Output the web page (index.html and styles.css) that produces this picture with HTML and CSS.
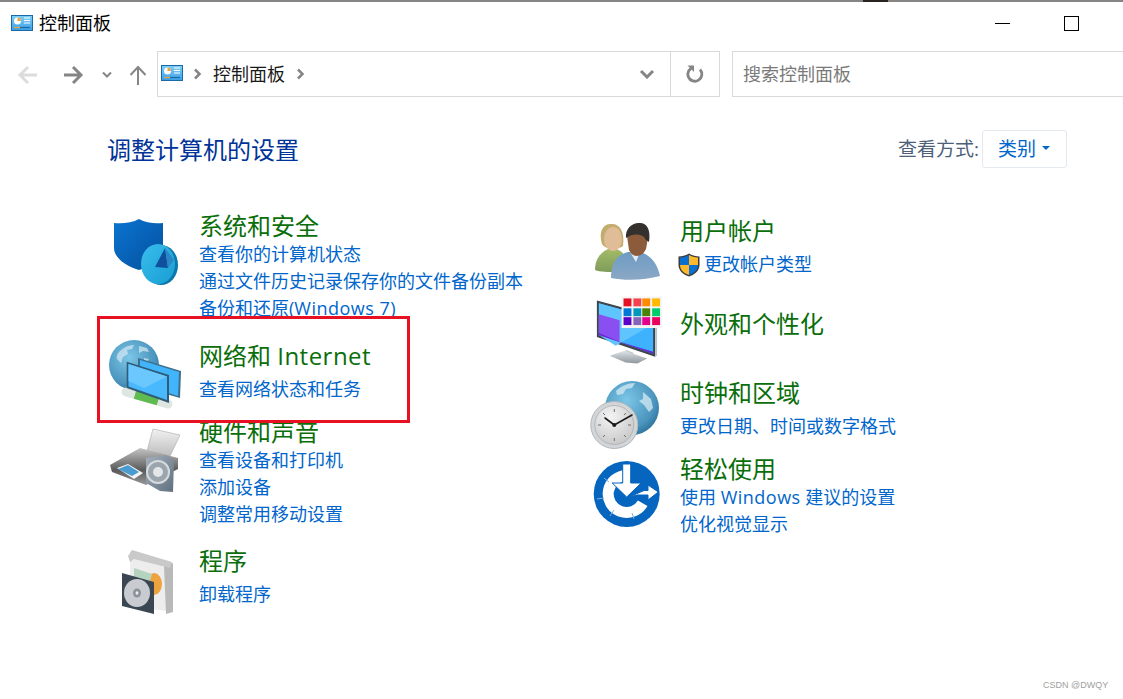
FILE: index.html
```html
<!DOCTYPE html>
<html lang="zh-CN">
  <head>
    <meta charset="UTF-8" />
    <title>控制面板</title>
    <link rel="stylesheet" href="styles.css">
  </head>
  <body>
    <svg class="defs" width="0" height="0">
      <defs>
        <linearGradient id="cp-bg" x1="0" y1="0" x2="0" y2="1">
          <stop offset="0" stop-color="#7fd0fa" />
          <stop offset="1" stop-color="#3d9fe6" />
        </linearGradient>
        <radialGradient id="globe-bg" cx="0.4" cy="0.35" r="0.75">
          <stop offset="0" stop-color="#7cc6e8" />
          <stop offset="0.7" stop-color="#4a94bd" />
          <stop offset="1" stop-color="#25688f" />
        </radialGradient>
        <symbol id="cp-icon" viewBox="0 0 22 16">
          <rect x="0.5" y="0.5" width="21" height="15" fill="url(#cp-bg)" stroke="#1b6aa5" />
          <circle cx="6.5" cy="6" r="3.5" fill="#fff" />
          <path d="M6.5 6V2.5A3.5 3.5 0 0 1 10 6Z" fill="#f2a33a" />
          <path d="M13 3h6M13 5.5h6M13 8h6" stroke="#fff" stroke-width="1.2" />
          <path d="M3 12.5h6" stroke="#f2a33a" stroke-width="1.2" />
          <path d="M9 12.5h10" stroke="#1b6aa5" stroke-width="1.2" />
        </symbol>
      </defs>
    </svg>

    <div class="window">
      <div class="titlebar">
        <svg class="cp-small" width="22" height="16"><use href="#cp-icon" /></svg>
        <span class="title">控制面板</span>
        <span class="minimize"></span>
        <span class="maximize"></span>
      </div>

      <div class="navbar">
        <div class="nav-btns">
          <svg width="157" height="46" viewBox="0 0 157 46">
            <path d="M37 24H20M28 16l-8 8 8 8" fill="none" stroke="#dcdcdc" stroke-width="3" />
            <path d="M64 24h17M73 16l8 8-8 8" fill="none" stroke="#858585" stroke-width="3" />
            <path d="M103 21.500l4 4 4-4" fill="none" stroke="#858585" stroke-width="2" />
            <path d="M138 34V17M130.500 24l7.500-8 7.500 8" fill="none" stroke="#858585" stroke-width="2" />
          </svg>
        </div>
        <div class="address">
          <svg class="cp-small crumb-icon" width="22" height="16"><use href="#cp-icon" /></svg>
          <svg class="crumb-sep" width="9" height="12" viewBox="0 0 9 12"><path d="M2 1.500l4.500 4.500-4.500 4.500" fill="none" stroke="#858585" stroke-width="2.500" /></svg>
          <span class="crumb">控制面板</span>
          <svg class="crumb-sep" width="9" height="12" viewBox="0 0 9 12"><path d="M2 1.500l4.500 4.500-4.500 4.500" fill="none" stroke="#858585" stroke-width="2.500" /></svg>
          <span class="address-fill"></span>
          <svg class="address-drop" width="16" height="10" viewBox="0 0 16 10"><path d="M2 2l6 6 6-6" fill="none" stroke="#858585" stroke-width="3" /></svg>
          <span class="refresh">
            <svg width="20" height="20" viewBox="0 0 20 20">
              <path d="M6 4.500A7 7 0 1 0 13 4" fill="none" stroke="#858585" stroke-width="2.800" transform="rotate(22 10 10)" />
              <path d="M2.500 1.500h6.500v6.500z" fill="#858585" />
            </svg>
          </span>
        </div>
        <div class="search">搜索控制面板</div>
      </div>

      <div class="main">
        <div class="head">
          <h1>调整计算机的设置</h1>
          <span class="view-label">查看方式:</span>
          <span class="view-select">类别<i class="caret"></i></span>
        </div>

        <div class="columns">
          <div class="col col-left">
            <div class="cat">
              <svg class="icon icon-security" width="72" height="72" viewBox="0 0 72 72">
                <defs>
                  <linearGradient id="sh" x1="0" y1="0" x2="1" y2="1"><stop offset="0" stop-color="#0b74cf" /><stop offset="1" stop-color="#04509f" /></linearGradient>
                  <linearGradient id="pie" x1="0" y1="0" x2="1" y2="1"><stop offset="0" stop-color="#38bdee" /><stop offset="1" stop-color="#1a9ed2" /></linearGradient>
                </defs>
                <path d="M6 7C14 8 24 7 31 3C38 7 47 8 55 7V32C55 42 44 50 31 54C18 50 6 42 6 32Z" fill="url(#sh)" />
                <ellipse cx="53" cy="49" rx="17" ry="20" fill="#0a78ad" />
                <ellipse cx="50" cy="48" rx="17" ry="20" fill="url(#pie)" />
                <polygon points="47,51 57,32 60,52" fill="#0f4f9e" />
                <polygon points="57,32 66,44 60,52" fill="#2a86c4" />
              </svg>
              <div class="cat-body">
                <h2>系统和安全</h2>
                <ul class="links tight">
                  <li>查看你的计算机状态</li>
                  <li>通过文件历史记录保存你的文件备份副本</li>
                  <li>备份和还原(<span class="latin">Windows 7</span>)</li>
                </ul>
              </div>
            </div>

            <div class="cat">
              <svg class="icon icon-network" width="72" height="72" viewBox="0 0 72 72">
                <circle cx="26" cy="27" r="25" fill="url(#globe-bg)" />
                <path d="M12 13c4-4 9-6 14-6l-2 4-5 1 1 4-5 3-2 6-4-4c-1-3 1-6 3-8ZM31 8l8 2 2 4-6-1-4 2ZM36 20l5 1-2 3-3-2Z" fill="#d5eaf3" opacity="0.7" />
                <polygon points="30,20 73,33 72,60 30,48" fill="#3c6f8c" />
                <polygon points="32,22 71,34 70,58 32,46" fill="#42b4fb" />
                <path d="M18 54L60 66" stroke="#dfe6e2" stroke-width="9" stroke-linecap="round" />
                <path d="M27 56.500L50 63" stroke="#5fbb4f" stroke-width="9" />
                <polygon points="18.700,23.700 61,37 61,65 18.700,50" fill="#2f5d76" />
                <polygon points="20.500,26 59,38.500 59,62 20.500,48.500" fill="#4ab8fd" />
                <polygon points="20.500,26 59,38.500 36,50 20.500,43" fill="#6ac8ff" />
              </svg>
              <div class="cat-body">
                <h2>网络和 <span class="latin">Internet</span></h2>
                <ul class="links">
                  <li>查看网络状态和任务</li>
                </ul>
              </div>
            </div>

            <div class="cat">
              <svg class="icon icon-hardware" width="72" height="72" viewBox="0 0 72 72">
                <defs>
                  <linearGradient id="prn" x1="0" y1="0" x2="0" y2="1"><stop offset="0" stop-color="#c4c4c4" /><stop offset="0.6" stop-color="#5a5a5a" /><stop offset="1" stop-color="#9a9a9a" /></linearGradient>
                  <linearGradient id="spk" x1="0" y1="0" x2="1" y2="1"><stop offset="0" stop-color="#a5b1bd" /><stop offset="1" stop-color="#5f6f7e" /></linearGradient>
                  <linearGradient id="paper" x1="0" y1="0" x2="0" y2="1"><stop offset="0" stop-color="#f2f2f2" /><stop offset="1" stop-color="#bdbdbd" /></linearGradient>
                </defs>
                <polygon points="45,4 72,10 62,31 39,26" fill="url(#paper)" stroke="#a8a8a8" stroke-width="0.600" />
                <polygon points="2,40 32,23 70,33 70,44 38,60 4,47" fill="url(#prn)" />
                <polygon points="9,43 20,39 35,48 26,54" fill="#f4f4f4" />
                <polygon points="10,44 20,40 31,47 24,51" fill="#4a9bd0" />
                <polygon points="38,33 58,30 66,36 65,67 52,66 38,58" fill="url(#spk)" />
                <circle cx="50" cy="47" r="11" fill="#9aa5ad" stroke="#d5dadd" stroke-width="2" />
                <circle cx="50" cy="47" r="5" fill="#e3e6e8" />
              </svg>
              <div class="cat-body">
                <h2>硬件和声音</h2>
                <ul class="links tight">
                  <li>查看设备和打印机</li>
                  <li>添加设备</li>
                  <li>调整常用移动设置</li>
                </ul>
              </div>
            </div>

            <div class="cat">
              <svg class="icon icon-programs" width="72" height="72" viewBox="0 0 72 72">
                <polygon points="22,5 65,17 65,66 22,60" fill="#ededed" />
                <polygon points="56,20 65,17 65,66 58,68" fill="#b9b9b9" />
                <polygon points="20,10 24,4 64,16 62,22 26,13 22,16" fill="#c9c9c9" />
                <ellipse cx="46" cy="38" rx="8" ry="11" fill="#eea33f" />
                <polygon points="26,22 44,28 38,50 26,46" fill="#b5d3be" />
                <polygon points="14,27 46,36 46,68 14,60" fill="#3a4651" />
                <ellipse cx="29" cy="47" rx="13" ry="14" fill="#c8ccd0" />
                <ellipse cx="29" cy="47" rx="4" ry="4.500" fill="#8a929a" />
                <ellipse cx="29" cy="47" rx="1.500" ry="1.800" fill="#eee" />
              </svg>
              <div class="cat-body">
                <h2>程序</h2>
                <ul class="links">
                  <li>卸载程序</li>
                </ul>
              </div>
            </div>
          </div>

          <div class="col col-right">
            <div class="cat">
              <svg class="icon" width="72" height="72" viewBox="0 0 72 72">
                <defs>
                  <linearGradient id="man" x1="0" y1="0" x2="0" y2="1"><stop offset="0" stop-color="#6f9cc6" /><stop offset="1" stop-color="#8aa8c4" /></linearGradient>
                  <linearGradient id="wom" x1="0" y1="0" x2="0" y2="1"><stop offset="0" stop-color="#a3bd68" /><stop offset="1" stop-color="#7f9c5c" /></linearGradient>
                </defs>
                <path d="M5 54C5 42 12 34 22 32C30 33 36 38 38 48L28 56C18 56 10 56 5 54Z" fill="url(#wom)" />
                <path d="M12 28C8 14 14 7 22 8C30 8 35 16 33 30C28 34 16 34 12 28Z" fill="#c2ad6e" />
                <ellipse cx="23" cy="23" rx="9" ry="12" fill="#e0bd97" />
                <path d="M21 62C21 48 26 39 38 36H50C62 39 68 50 70 60C56 64 36 65 21 62Z" fill="url(#man)" />
                <path d="M40 36L46 46L50 36Z" fill="#e6eef3" />
                <path d="M37 20C37 10 58 8 58 22L56 33C52 42 42 42 39 34Z" fill="#8b5b3c" />
                <path d="M36 22C35 11 44 6 50 7C57 7 61 14 59 26L56 24C54 18 44 16 36 22Z" fill="#33302e" />
              </svg>
              <div class="cat-body">
                <h2>用户帐户</h2>
                <ul class="links">
                  <li class="with-shield">
                    <svg width="22" height="24" viewBox="0 0 22 24">
                      <path d="M11 .500C14 2.500 17.500 3.500 21.500 3.500V12C21.500 18 16 22 11 23.500C6 22 .500 18 .500 12V3.500C4.500 3.500 8 2.500 11 .500Z" fill="#3b3b3b" />
                      <path d="M11 2V12H2V4.500C5.500 4.500 8.500 3.500 11 2Z" fill="#0a6fd0" />
                      <path d="M11 2C13.500 3.500 16.500 4.500 20 4.500V12H11Z" fill="#fdb92e" />
                      <path d="M2 12H11V22C6 20.500 2 17 2 12Z" fill="#fdb92e" />
                      <path d="M11 12H20C20 17 16 20.500 11 22Z" fill="#0a6fd0" />
                    </svg>
                    更改帐户类型
                  </li>
                </ul>
              </div>
            </div>

            <div class="cat">
              <svg class="icon icon-appearance" width="73" height="72" viewBox="0 0 73 72">
                <defs>
                  <linearGradient id="stand" x1="0" y1="0" x2="0" y2="1"><stop offset="0" stop-color="#dfe4e7" /><stop offset="1" stop-color="#8e979d" /></linearGradient>
                </defs>
                <polygon points="7,6 66,22 66,63 7,43" fill="#3d444a" />
                <polygon points="68,22 66,22 66,63 68,62" fill="#b8c4cb" />
                <polygon points="9,9 64,24 64,60 9,41" fill="#3fb2fd" />
                <polygon points="9,9 64,24 64,30 26,52 9,41" fill="#60c4ff" />
                <polygon points="9,20 30,26 30,48 9,41" fill="#8a4ff0" />
                <polygon points="30,48 64,58 64,60 9,41 9,39" fill="#6a24d8" />
                <polygon points="36,56 44,59 44,64 36,62" fill="#c0c8cd" />
                <polygon points="20,62 35,57 58,65 48,70 36,69" fill="url(#stand)" />
                <rect x="32" y="2" width="41" height="32" fill="#f4f4f4" />
                <rect x="34" y="4" width="8" height="8" fill="#e81123" />
                <rect x="44" y="4" width="8" height="8" fill="#f4434f" />
                <rect x="53" y="4" width="8" height="8" fill="#ff8c00" />
                <rect x="63" y="4" width="8" height="8" fill="#ffb900" />
                <rect x="34" y="14" width="8" height="8" fill="#0078d7" />
                <rect x="44" y="14" width="8" height="8" fill="#0099bc" />
                <rect x="53" y="14" width="8" height="8" fill="#498205" />
                <rect x="63" y="14" width="8" height="8" fill="#00cc6a" />
                <rect x="34" y="23" width="8" height="8" fill="#5c00c8" />
                <rect x="44" y="23" width="8" height="8" fill="#8764b8" />
                <rect x="53" y="23" width="8" height="8" fill="#e3008c" />
                <rect x="63" y="23" width="8" height="8" fill="#ea005e" />
              </svg>
              <div class="cat-body">
                <h2>外观和个性化</h2>
              </div>
            </div>

            <div class="cat">
              <svg class="icon" width="72" height="72" viewBox="0 0 72 72">
                <defs>
                  <radialGradient id="face" cx="0.4" cy="0.3" r="0.8"><stop offset="0" stop-color="#f4f4f4" /><stop offset="1" stop-color="#c4c4c4" /></radialGradient>
                </defs>
                <circle cx="42" cy="30" r="27" fill="url(#globe-bg)" />
                <path d="M26 13c5-5 12-8 19-8l-3 5-6 1-3 5-6 1ZM53 14l8 7 2 9-4 4-5-7-5-4 4-2Z" fill="#d6ebf4" opacity="0.75" />
                <circle cx="24.300" cy="47" r="23.500" fill="#d3d6d8" stroke="#b2b6b9" />
                <circle cx="24.300" cy="47" r="19.500" fill="url(#face)" stroke="#9da1a4" stroke-width="0.600" />
                <path d="M24.300 31v3M24.300 60v3M8 47h3M38 47h3M13 35l2 2M34 57l2 2M13 59l2-2M34 37l2-2" stroke="#6f6f6f" stroke-width="1" />
                <path d="M24.300 47L42 37M24.300 47L15 40" stroke="#1c1c1c" stroke-width="1.600" stroke-linecap="round" />
                <circle cx="24.300" cy="47" r="2" fill="#1c1c1c" />
              </svg>
              <div class="cat-body">
                <h2>时钟和区域</h2>
                <ul class="links">
                  <li>更改日期、时间或数字格式</li>
                </ul>
              </div>
            </div>

            <div class="cat">
              <svg class="icon icon-ease" width="72" height="72" viewBox="0 0 72 72">
                <circle cx="36.700" cy="36" r="33" fill="#0565bf" />
                <path d="M36.700 17.500A18.500 18.500 0 1 0 52.700 45.250" fill="none" stroke="#fff" stroke-width="11" />
                <path d="M19 24l-5-4M14 40l-7 1M24 52l-4 6M42 55l2 6" stroke="#7fb2e0" stroke-width="1" />
                <path d="M32.700 6h8v19h10.500L36.700 39 22.200 25h10.500Z" fill="#fff" stroke="#0565bf" stroke-width="1" />
                <path d="M39 39l15-6.500h4V27l10.300 7L58 42v-5H47Z" fill="#fff" stroke="#0565bf" stroke-width="1" />
              </svg>
              <div class="cat-body">
                <h2>轻松使用</h2>
                <ul class="links tight">
                  <li>使用 <span class="latin">Windows</span> 建议的设置</li>
                  <li>优化视觉显示</li>
                </ul>
              </div>
            </div>
          </div>
        </div>
      </div>

      <!-- things on top of the window -->
      <div class="top-blob"></div>
      <div class="redbox"></div>
      <div class="watermark">CSDN @DWQY</div>
    </div>
  </body>
</html>
```

FILE: styles.css
```css
html, body {
   margin: 0;
   padding: 0;
   background-color: white;
}
h1, h2, ul {
   margin: 0;
   padding: 0;
   font-weight: normal;
}
ul {
   list-style: none;
}
.defs {
   display: block;
   height: 0;
}
.window {
   position: relative;
   width: 1123px;
   height: 699px;
   overflow: hidden;
   font-family: "Open Sans", "Noto Sans CJK SC", sans-serif;
   font-size: 18px;
}
.latin {
   letter-spacing: 0.48px;
}

/* title bar */
.titlebar {
   display: flex;
   align-items: center;
   height: 51px;
   padding: 0 0 7px 11px;
   box-sizing: border-box;
   border-top: 2px solid #858585;
}
.cp-small {
   display: block;
   flex: none;
}
.title {
   margin-left: 6px;
   color: #000;
   line-height: 24px;
}
.minimize {
   width: 15px;
   height: 1px;
   margin-left: 884px;
   background-color: #000;
}
.maximize {
   width: 13px;
   height: 13px;
   margin-left: 54px;
   border: 1px solid #000;
}

/* nav row */
.navbar {
   display: flex;
   height: 46px;
}
.nav-btns {
   flex: none;
   width: 157px;
   height: 46px;
}
.address {
   display: flex;
   align-items: center;
   flex: none;
   width: 563px;
   height: 46px;
   box-sizing: border-box;
   border: 1px solid #d9d9d9;
}
.crumb-icon {
   margin-left: 3px;
   margin-bottom: 2px;
}
.crumb-sep {
   margin-left: 10px;
   flex: none;
}
.crumb {
   margin-left: 11px;
   padding-bottom: 2px;
   color: #1a1a1a;
}
.crumb + .crumb-sep {
   margin-left: 11px;
}
.address-fill {
   flex: 1;
}
.address-drop {
   margin-right: 15px;
}
.refresh {
   display: flex;
   align-items: center;
   justify-content: center;
   width: 48px;
   height: 100%;
   border-left: 1px solid #d9d9d9;
}
.search {
   flex: 1;
   height: 46px;
   margin-left: 12px;
   margin-right: -2px;
   padding-left: 10px;
   box-sizing: border-box;
   border: 1px solid #d9d9d9;
   color: #7a7a7a;
   line-height: 44px;
}

/* content */
.main {
   padding: 33px 56px 0 108px;
}
.head {
   display: flex;
   align-items: center;
   height: 38px;
}
h1 {
   flex: 1;
   margin-left: -1px;
   padding-top: 2px;
   font-size: 24px;
   line-height: 38px;
   color: #003399;
}
.view-label {
   font-size: 19px;
   padding-bottom: 2px;
   color: #4c607a;
   margin-right: 3px;
}
.view-select {
   display: flex;
   align-items: center;
   width: 85px;
   height: 38px;
   padding: 0 0 2px 15px;
   box-sizing: border-box;
   border: 1px solid #e3e9ef;
   border-radius: 3px;
   font-size: 19px;
   color: #0066cc;
}
.caret {
   width: 0;
   height: 0;
   margin-left: 6px;
   border-left: 4px solid transparent;
   border-right: 4px solid transparent;
   border-top: 4px solid #0066cc;
}
.columns {
   display: flex;
   margin-top: 43px;
}
.col {
   display: grid;
   flex: none;
}
.col-left {
   width: 482px;
   grid-template-rows: 130px 76px 129px auto;
}
.col-right {
   width: 420px;
   padding-top: 5px;
   grid-template-rows: 93px 69px 76px auto;
}
.cat {
   display: flex;
   align-items: flex-start;
}
.icon {
   display: block;
   flex: none;
   width: 72px;
   margin-right: 19px;
   overflow: visible;
}
.col-right .icon {
   margin-right: 18px;
}
.icon-security {
   margin-top: 5px;
}
.icon-network {
   margin-top: -3px;
}
.icon-hardware {
   margin-top: 8px;
}
.icon-appearance {
   margin-top: -15px;
}
.icon-ease {
   margin-top: 4px;
}
h2 {
   font-size: 24px;
   line-height: 30px;
   color: #0a6e0a;
   white-space: nowrap;
}
.links {
   margin-top: 5px;
   color: #0066cc;
   white-space: nowrap;
}
.links.tight {
   margin-top: 0;
}
.links li {
   line-height: 27px;
}
.with-shield {
   display: flex;
   align-items: center;
   gap: 4px;
   margin-left: -2px;
}

/* overlays */
.top-blob {
   position: absolute;
   left: 863px;
   top: 0;
   width: 25px;
   height: 2px;
   background-color: #2a2420;
}
.redbox {
   position: absolute;
   left: 97px;
   top: 316px;
   width: 313px;
   height: 107px;
   box-sizing: border-box;
   border: 3px solid #e81123;
}
.watermark {
   position: absolute;
   left: 1043px;
   top: 678px;
   font-family: "Liberation Sans", sans-serif;
   font-size: 9px;
   line-height: 14px;
   color: #a0a0a0;
}
```
